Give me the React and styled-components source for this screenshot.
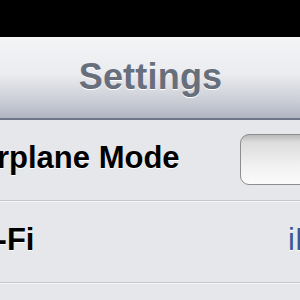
import styled, { createGlobalStyle } from 'styled-components'

const GlobalStyle = createGlobalStyle`
  html, body {
    margin: 0;
    padding: 0;
    overflow: hidden;
    background: #e6e7eb;
    font-family: "Liberation Sans", Arial, sans-serif;
  }
`

const Screen = styled.div`
  width: 300px;
  height: 300px;
  overflow: hidden;
  display: flex;
  flex-direction: column;
  background: #e6e7eb;
`

const StatusBar = styled.div`
  height: 37px;
  flex: 0 0 37px;
  background: #000;
`

const NavBar = styled.div`
  height: 80px;
  flex: 0 0 80px;
  display: flex;
  align-items: center;
  justify-content: center;
  border-top: 1px solid #fbfbfc;
  border-bottom: 2px solid #6f7689;
  background: linear-gradient(#f3f4f6 0%, #ebecef 45%, #c9ccd5 80%, #b0b5c2 100%);
`

const Title = styled.h1`
  margin: 0 0 2px 1px;
  font-size: 36px;
  font-weight: bold;
  color: #676e7c;
  text-shadow: 0 1px 0 #fff;
  letter-spacing: 0.2px;
`

const List = styled.div`
  margin-left: -34px;
  width: 440px;
  display: flex;
  flex-direction: column;
`

const Row = styled.div`
  height: 80px;
  flex: 0 0 80px;
  display: flex;
  align-items: center;
  background: #e6e7eb;
  border-bottom: 1px solid #c6c7cc;
  box-shadow: 0 1px 0 #f6f6f8;
  margin-bottom: 1px;
`

const Label = styled.div`
  flex: 0 0 ${(p) => p.$width}px;
  margin-left: ${(p) => p.$shift || 0}px;
  font-size: 31px;
  font-weight: bold;
  color: #000;
  text-shadow: 0 1px 0 #fff;
  margin-top: -5px;
`

const Value = styled.div`
  font-size: 31px;
  color: #3a5996;
  margin-top: -5px;
  text-shadow: 0 1px 0 #fff;
`

const Switch = styled.div`
  width: 96px;
  height: 51px;
  margin-top: -2px;
  box-sizing: border-box;
  border: 1.5px solid #8d8d8f;
  border-radius: 9px;
  background: linear-gradient(#b9b9ba 0%, #dcdcdd 15%, #f0f0f0 60%, #fbfbfb 100%);
`

const App = () => {
  return (
    <Screen>
      <GlobalStyle />
      <StatusBar />
      <NavBar>
        <Title>Settings</Title>
      </NavBar>
      <List>
        <Row>
          <Label $width={274}>Airplane Mode</Label>
          <Switch />
        </Row>
        <Row>
          <Label $width={329} $shift={-7}>Wi-Fi</Label>
          <Value>iPhone</Value>
        </Row>
        <Row />
      </List>
    </Screen>
  )
}

export default App
